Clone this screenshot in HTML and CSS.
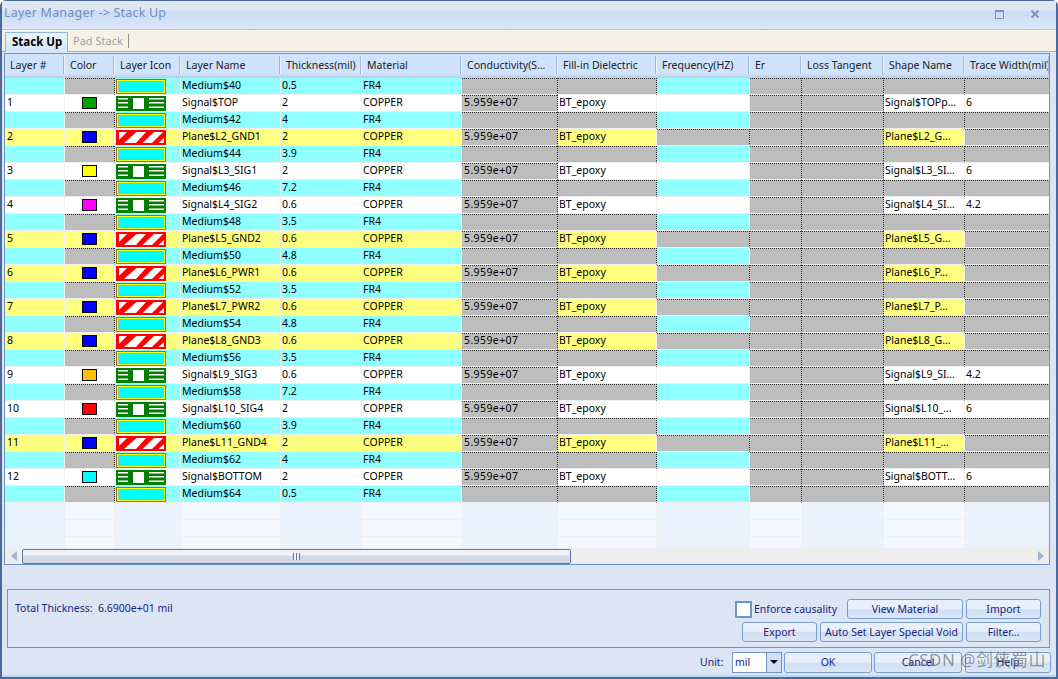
FILE: index.html
```html
<!DOCTYPE html>
<html lang="en">
<head>
<meta charset="utf-8">
<title>Layer Manager -&gt; Stack Up</title>
<link rel="stylesheet" href="styles.css">
</head>
<body>
<svg class="defs" width="0" height="0" aria-hidden="true">
  <symbol id="ic-med" viewBox="0 0 50 15">
    <rect width="50" height="15" fill="#808000"/>
    <rect x="1" y="1" width="48" height="13" fill="#ffff00"/>
    <rect x="2" y="2" width="46" height="11" fill="#b0b0a0"/>
    <rect x="3" y="3" width="44" height="9" fill="#00ffff"/>
  </symbol>
  <symbol id="ic-sig" viewBox="0 0 50 15">
    <rect width="50" height="15" fill="#008000"/>
    <path d="M2 2h10v1.500H2zM2 6h10v1.500H2zM2 10.500h10V12H2zM33 2h15v1.500H33zM33 6h15v1.500H33zM33 10.500h15V12H33zM17 2h11v11H17z" fill="#fff"/>
  </symbol>
  <symbol id="ic-pln" viewBox="0 0 50 15">
    <rect width="50" height="15" fill="#ff0000"/>
    <path d="M3 2h8L3 10zM8 13L20.500 2H30L20 13zM26.500 13L38 2h9L36 13zM42.500 13L48 8v5z" fill="#fff"/>
  </symbol>
</svg>
<div class="window">
  <header class="titlebar">
    <span class="title">Layer Manager -&gt; Stack Up</span>
    <span class="winbtns">
      <span class="maxbtn"></span>
      <svg class="closebtn" width="10" height="10" viewBox="0 0 10 10"><path d="M1.500 1.500l7 7M8.500 1.500l-7 7" stroke="#7f93b2" stroke-width="2" fill="none"/></svg>
    </span>
  </header>
  <nav class="tabs">
    <span class="tab active">Stack Up</span>
    <span class="tab">Pad Stack</span>
  </nav>
  <section class="gridbox">
    <table class="grid">
      <colgroup>
        <col class="c1"><col class="c2"><col class="c3"><col class="c4"><col class="c5"><col class="c6"><col class="c7"><col class="c8"><col class="c9"><col class="c10"><col class="c11"><col class="c12"><col class="c13">
      </colgroup>
      <thead>
        <tr><th>Layer #</th><th>Color</th><th>Layer Icon</th><th>Layer Name</th><th>Thickness(mil)</th><th>Material</th><th>Conductivity(S…</th><th>Fill-in Dielectric</th><th>Frequency(HZ)</th><th>Er</th><th>Loss Tangent</th><th>Shape Name</th><th>Trace Width(mil)</th></tr>
      </thead>
      <tbody>
        <tr class="m"><td></td><td class="g"></td><td class="i"><svg class="ic"><use href="#ic-med"/></svg></td><td>Medium$40</td><td>0.5</td><td>FR4</td><td class="g"></td><td class="g"></td><td></td><td class="g"></td><td class="g"></td><td class="g"></td><td class="g"></td></tr>
        <tr class="s"><td>1</td><td><span class="sw green"></span></td><td class="i"><svg class="ic"><use href="#ic-sig"/></svg></td><td>Signal$TOP</td><td>2</td><td>COPPER</td><td class="g">5.959e+07</td><td>BT_epoxy</td><td></td><td class="g"></td><td class="g"></td><td>Signal$TOPp…</td><td>6</td></tr>
        <tr class="m"><td></td><td class="g"></td><td class="i"><svg class="ic"><use href="#ic-med"/></svg></td><td>Medium$42</td><td>4</td><td>FR4</td><td class="g"></td><td class="g"></td><td></td><td class="g"></td><td class="g"></td><td class="g"></td><td class="g"></td></tr>
        <tr class="p"><td>2</td><td><span class="sw blue"></span></td><td class="i"><svg class="ic"><use href="#ic-pln"/></svg></td><td>Plane$L2_GND1</td><td>2</td><td>COPPER</td><td class="g">5.959e+07</td><td>BT_epoxy</td><td class="g"></td><td class="g"></td><td class="g"></td><td>Plane$L2_G…</td><td class="g"></td></tr>
        <tr class="m"><td></td><td class="g"></td><td class="i"><svg class="ic"><use href="#ic-med"/></svg></td><td>Medium$44</td><td>3.9</td><td>FR4</td><td class="g"></td><td class="g"></td><td></td><td class="g"></td><td class="g"></td><td class="g"></td><td class="g"></td></tr>
        <tr class="s"><td>3</td><td><span class="sw yellow"></span></td><td class="i"><svg class="ic"><use href="#ic-sig"/></svg></td><td>Signal$L3_SIG1</td><td>2</td><td>COPPER</td><td class="g">5.959e+07</td><td>BT_epoxy</td><td></td><td class="g"></td><td class="g"></td><td>Signal$L3_SI…</td><td>6</td></tr>
        <tr class="m"><td></td><td class="g"></td><td class="i"><svg class="ic"><use href="#ic-med"/></svg></td><td>Medium$46</td><td>7.2</td><td>FR4</td><td class="g"></td><td class="g"></td><td></td><td class="g"></td><td class="g"></td><td class="g"></td><td class="g"></td></tr>
        <tr class="s"><td>4</td><td><span class="sw magenta"></span></td><td class="i"><svg class="ic"><use href="#ic-sig"/></svg></td><td>Signal$L4_SIG2</td><td>0.6</td><td>COPPER</td><td class="g">5.959e+07</td><td>BT_epoxy</td><td></td><td class="g"></td><td class="g"></td><td>Signal$L4_SI…</td><td>4.2</td></tr>
        <tr class="m"><td></td><td class="g"></td><td class="i"><svg class="ic"><use href="#ic-med"/></svg></td><td>Medium$48</td><td>3.5</td><td>FR4</td><td class="g"></td><td class="g"></td><td></td><td class="g"></td><td class="g"></td><td class="g"></td><td class="g"></td></tr>
        <tr class="p"><td>5</td><td><span class="sw blue"></span></td><td class="i"><svg class="ic"><use href="#ic-pln"/></svg></td><td>Plane$L5_GND2</td><td>0.6</td><td>COPPER</td><td class="g">5.959e+07</td><td>BT_epoxy</td><td class="g"></td><td class="g"></td><td class="g"></td><td>Plane$L5_G…</td><td class="g"></td></tr>
        <tr class="m"><td></td><td class="g"></td><td class="i"><svg class="ic"><use href="#ic-med"/></svg></td><td>Medium$50</td><td>4.8</td><td>FR4</td><td class="g"></td><td class="g"></td><td></td><td class="g"></td><td class="g"></td><td class="g"></td><td class="g"></td></tr>
        <tr class="p"><td>6</td><td><span class="sw blue"></span></td><td class="i"><svg class="ic"><use href="#ic-pln"/></svg></td><td>Plane$L6_PWR1</td><td>0.6</td><td>COPPER</td><td class="g">5.959e+07</td><td>BT_epoxy</td><td class="g"></td><td class="g"></td><td class="g"></td><td>Plane$L6_P…</td><td class="g"></td></tr>
        <tr class="m"><td></td><td class="g"></td><td class="i"><svg class="ic"><use href="#ic-med"/></svg></td><td>Medium$52</td><td>3.5</td><td>FR4</td><td class="g"></td><td class="g"></td><td></td><td class="g"></td><td class="g"></td><td class="g"></td><td class="g"></td></tr>
        <tr class="p"><td>7</td><td><span class="sw blue"></span></td><td class="i"><svg class="ic"><use href="#ic-pln"/></svg></td><td>Plane$L7_PWR2</td><td>0.6</td><td>COPPER</td><td class="g">5.959e+07</td><td>BT_epoxy</td><td class="g"></td><td class="g"></td><td class="g"></td><td>Plane$L7_P…</td><td class="g"></td></tr>
        <tr class="m"><td></td><td class="g"></td><td class="i"><svg class="ic"><use href="#ic-med"/></svg></td><td>Medium$54</td><td>4.8</td><td>FR4</td><td class="g"></td><td class="g"></td><td></td><td class="g"></td><td class="g"></td><td class="g"></td><td class="g"></td></tr>
        <tr class="p"><td>8</td><td><span class="sw blue"></span></td><td class="i"><svg class="ic"><use href="#ic-pln"/></svg></td><td>Plane$L8_GND3</td><td>0.6</td><td>COPPER</td><td class="g">5.959e+07</td><td>BT_epoxy</td><td class="g"></td><td class="g"></td><td class="g"></td><td>Plane$L8_G…</td><td class="g"></td></tr>
        <tr class="m"><td></td><td class="g"></td><td class="i"><svg class="ic"><use href="#ic-med"/></svg></td><td>Medium$56</td><td>3.5</td><td>FR4</td><td class="g"></td><td class="g"></td><td></td><td class="g"></td><td class="g"></td><td class="g"></td><td class="g"></td></tr>
        <tr class="s"><td>9</td><td><span class="sw orange"></span></td><td class="i"><svg class="ic"><use href="#ic-sig"/></svg></td><td>Signal$L9_SIG3</td><td>0.6</td><td>COPPER</td><td class="g">5.959e+07</td><td>BT_epoxy</td><td></td><td class="g"></td><td class="g"></td><td>Signal$L9_SI…</td><td>4.2</td></tr>
        <tr class="m"><td></td><td class="g"></td><td class="i"><svg class="ic"><use href="#ic-med"/></svg></td><td>Medium$58</td><td>7.2</td><td>FR4</td><td class="g"></td><td class="g"></td><td></td><td class="g"></td><td class="g"></td><td class="g"></td><td class="g"></td></tr>
        <tr class="s"><td>10</td><td><span class="sw red"></span></td><td class="i"><svg class="ic"><use href="#ic-sig"/></svg></td><td>Signal$L10_SIG4</td><td>2</td><td>COPPER</td><td class="g">5.959e+07</td><td>BT_epoxy</td><td></td><td class="g"></td><td class="g"></td><td>Signal$L10_…</td><td>6</td></tr>
        <tr class="m"><td></td><td class="g"></td><td class="i"><svg class="ic"><use href="#ic-med"/></svg></td><td>Medium$60</td><td>3.9</td><td>FR4</td><td class="g"></td><td class="g"></td><td></td><td class="g"></td><td class="g"></td><td class="g"></td><td class="g"></td></tr>
        <tr class="p"><td>11</td><td><span class="sw blue"></span></td><td class="i"><svg class="ic"><use href="#ic-pln"/></svg></td><td>Plane$L11_GND4</td><td>2</td><td>COPPER</td><td class="g">5.959e+07</td><td>BT_epoxy</td><td class="g"></td><td class="g"></td><td class="g"></td><td>Plane$L11_…</td><td class="g"></td></tr>
        <tr class="m"><td></td><td class="g"></td><td class="i"><svg class="ic"><use href="#ic-med"/></svg></td><td>Medium$62</td><td>4</td><td>FR4</td><td class="g"></td><td class="g"></td><td></td><td class="g"></td><td class="g"></td><td class="g"></td><td class="g"></td></tr>
        <tr class="s"><td>12</td><td><span class="sw cyan"></span></td><td class="i"><svg class="ic"><use href="#ic-sig"/></svg></td><td>Signal$BOTTOM</td><td>2</td><td>COPPER</td><td class="g">5.959e+07</td><td>BT_epoxy</td><td></td><td class="g"></td><td class="g"></td><td>Signal$BOTT…</td><td>6</td></tr>
        <tr class="m"><td></td><td class="g"></td><td class="i"><svg class="ic"><use href="#ic-med"/></svg></td><td>Medium$64</td><td>0.5</td><td>FR4</td><td class="g"></td><td class="g"></td><td></td><td class="g"></td><td class="g"></td><td class="g"></td><td class="g"></td></tr>
        <tr class="e"><td></td><td></td><td></td><td></td><td></td><td></td><td></td><td></td><td></td><td></td><td></td><td></td><td></td></tr>
        <tr class="e"><td></td><td></td><td></td><td></td><td></td><td></td><td></td><td></td><td></td><td></td><td></td><td></td><td></td></tr>
        <tr class="e last"><td></td><td></td><td></td><td></td><td></td><td></td><td></td><td></td><td></td><td></td><td></td><td></td><td></td></tr>
      </tbody>
    </table>
    <div class="hscroll">
      <span class="arrow left"></span>
      <span class="thumb"><span class="grip"></span></span>
      <span class="arrow right"></span>
    </div>
  </section>
  <section class="panel">
    <span class="total">Total Thickness:&nbsp; 6.6900e+01 mil</span>
    <div class="actions">
      <div class="actrow">
        <label class="check"><span class="box"></span>Enforce causality</label>
        <button class="btn w-view">View Material</button>
        <button class="btn w-side">Import</button>
      </div>
      <div class="actrow">
        <button class="btn w-side">Export</button>
        <button class="btn w-auto">Auto Set Layer Special Void</button>
        <button class="btn w-side">Filter...</button>
      </div>
    </div>
  </section>
  <footer class="foot">
    <span class="unit-label">Unit:</span>
    <span class="combo"><span class="combo-val">mil</span><span class="combo-btn"></span></span>
    <button class="btn w-ok">OK</button>
    <button class="btn w-ok">Cancel</button>
    <button class="btn w-help">Help</button>
  </footer>
  <span class="watermark">CSDN @剑侠蜀山</span>
</div>
</body>
</html>
```
FILE: styles.css
```css
* { box-sizing: border-box; }
html, body { margin: 0; padding: 0; height: 100%; background: #fff; overflow: hidden; }
body { font-family: "Noto Sans", "Liberation Sans", sans-serif; font-size: 10.5px; color: #000; }
.defs { position: absolute; }
.window {
  position: relative; width: 1058px; height: 679px;
  background: #dbe5f3; border: 2px solid #4a6a9c; border-top-width: 1px; border-right-width: 2px;
  border-radius: 6px 6px 0 0;
  box-shadow: inset 0 -2px 0 #c0d4ee;
  display: flex; flex-direction: column;
}
.titlebar {
  height: 29px; flex: none; display: flex; align-items: center; justify-content: space-between;
  padding: 0 16px 2px 2px;
  background: linear-gradient(#dfe7f4 0, #dfe7f4 9px, #cbdcf6 11px, #dbe7f9 29px);
  border-bottom: 1px solid #a9c6ee;
}
.title { font-size: 12.5px; color: #6e8fc0; letter-spacing: 0.2px; margin-bottom: 4px; }
.winbtns { display: flex; align-items: center; gap: 26px; }
.maxbtn { width: 9px; height: 9px; border: 1px solid #7f93b2; border-top-width: 2px; }
.closebtn { display: block; }
.tabs {
  height: 22px; flex: none; padding: 2px 0 0 3px; display: flex; align-items: stretch;
  background: #f5f1e6; border-bottom: 1px solid #8fb4e3;
}
.tab { padding: 0 5px; color: #a0a0a0; font-size: 11px; border-right: 1px solid #8f8f8f; margin: 2px 0 3px; line-height: 13px; }
.tab.active {
  color: #000; font-weight: 700; font-size: 11.5px; width: 63px; padding: 1px 0 0 6px; margin: 0 0 -1px;
  background: linear-gradient(#eef4fd, #d4e4f9); border: 1px solid #8fb4e3; border-bottom: 0; line-height: 16px;
}
.gridbox {
  flex: none; height: 512px; margin: 1px 6px 0 2px; background: #eee; border: 1px solid #6f94c9;
  display: flex; flex-direction: column; overflow: hidden;
}
.grid { border-collapse: separate; border-spacing: 0; table-layout: fixed; width: 1045px; flex: none; }
.c1 { width: 60px; } .c2 { width: 50px; } .c3 { width: 66px; } .c4 { width: 100px; } .c5 { width: 81px; }
.c6 { width: 100px; } .c7 { width: 96px; } .c8 { width: 99px; } .c9 { width: 93px; } .c10 { width: 52px; }
.c11 { width: 82px; } .c12 { width: 81px; } .c13 { width: 85px; }
.grid th {
  height: 24px; padding: 4px 0 0 5px; font-weight: 400; text-align: left; white-space: nowrap; overflow: hidden;
  line-height: 15px; vertical-align: top;
  color: #222; background: linear-gradient(#cfe3fd 0, #cfe3fd 20px, #bcc9dc 24px);
  position: relative;
}
.grid th::after {
  content: ""; position: absolute; right: 1px; top: 2px; bottom: 4px; width: 1px; background: #9db7d8;
  box-shadow: 1px 0 0 #eef5fe;
}
.grid td {
  height: 17px; padding: 0 0 0 1px; line-height: 15px; white-space: nowrap; overflow: hidden; vertical-align: top;
  color: #000; border-right: 1px solid #f0f0f0; border-bottom: 1px solid #f0f0f0;
}
.grid td:first-child { padding-left: 2px; }
.m td { background: #8fffff; }
.s td { background: #fff; }
.p td { background: #ffff7f; }
.grid tr td.g {
  padding-left: 2px; letter-spacing: 0.4px;
  background: repeating-linear-gradient(90deg, #333 0 1px, #bdbdbd 1px 2px) top left / 100% 1px no-repeat, #bdbdbd;
  border-right: 1px dotted #333;
}
.grid td.i { padding: 0; }
.ic { display: block; width: 50px; height: 15px; margin: 1px 0 0 1px; }
.s td:nth-child(2), .p td:nth-child(2) { text-align: center; padding: 2px 0 0; }
.sw { display: block; margin: 0 auto; width: 15px; height: 12px; border: 1px solid #000; }
.green { background: #00a000; } .blue { background: #0000ff; } .yellow { background: #ffff00; }
.magenta { background: #ff00ff; } .orange { background: #ffc000; } .red { background: #ff0000; } .cyan { background: #00ffff; }
.e td { background: #e8f3fe; }
.e td:nth-child(even) { background: #f4f9ff; }
.grid .last td { height: 11px; border-bottom: 0; }
.hscroll {
  height: 16px; flex: none; display: flex; align-items: center; position: relative; padding-left: 17px; background: #eee;
}
.arrow { position: absolute; top: 3px; width: 0; height: 0; border: 5px solid transparent; }
.arrow.left { left: 6px; border-left-width: 0; border-right: 6px solid #9fb3d3; }
.arrow.right { right: 5px; border-right-width: 0; border-left: 6px solid #9fb3d3; }
.thumb {
  width: 549px; height: 15px; border: 1px solid #5b78a8; border-radius: 2px; display: flex; align-items: center; justify-content: center;
  background: linear-gradient(#eef2f8 0, #eef2f8 5px, #d3dae6 6px, #d3dae6 100%);
}
.grip { width: 7px; height: 7px; background: repeating-linear-gradient(90deg, #5b78a8 0 1px, #eef2f8 1px 3px); }
.panel {
  flex: none; height: 59px; margin: 24px 6px 0 5px; padding: 9px 8px 5px 7px; border: 1px solid #6f94c9;
  display: flex; justify-content: space-between; align-items: flex-start;
}
.total { color: #1a237e; line-height: 19px; }
.actions { display: flex; flex-direction: column; gap: 3px; }
.actrow { display: flex; justify-content: flex-end; gap: 3px; align-items: center; }
.check { display: flex; align-items: center; color: #1a237e; margin-right: 7px; }
.box { width: 17px; height: 17px; background: #fff; border: 2px solid #6f94c9; margin-right: 2px; }
.btn {
  height: 20px; padding: 0; font: inherit; color: #1a237e; border: 1px solid #7a9ccb; border-radius: 3px;
  background: linear-gradient(#e8f0fb 0, #e8f0fb 45%, #cfdff3 55%, #dbe7f6 100%);
}
.w-view { width: 116px; } .w-side { width: 75px; } .w-auto { width: 143px; }
.foot { flex: none; display: flex; align-items: center; height: 22px; margin-top: 3px; padding-left: 698px; gap: 2px; }
.unit-label { width: 30px; color: #1a237e; }
.combo { width: 50px; height: 21px; display: flex; border: 1px solid #6f94c9; background: #fff; }
.combo-val { flex: 1; color: #1a237e; padding: 2px 0 0 2px; }
.combo-btn { width: 15px; position: relative; background: #cfe0f6; border-left: 1px solid #6f94c9; }
.combo-btn::after { content: ""; position: absolute; left: 3px; top: 7px; border: 4px solid transparent; border-top: 4px solid #000; border-bottom: 0; }
.w-ok { width: 88px; height: 21px; }
.w-help { width: 86px; height: 21px; margin-left: 1px; }
.watermark {
  position: absolute; left: 906px; top: 649px; font-size: 17px; letter-spacing: 0.5px; line-height: 20px; white-space: nowrap;
  color: rgba(110,110,110,.7); font-family: "Noto Sans", "Noto Sans CJK SC", sans-serif;
}
```
